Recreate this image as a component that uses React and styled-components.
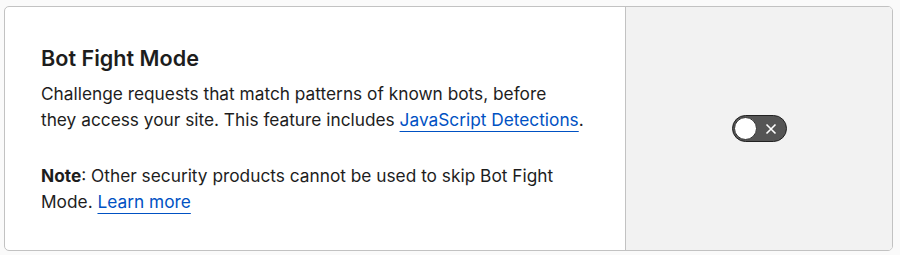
import React from 'react';
import styled, { createGlobalStyle } from 'styled-components';

const GlobalStyle = createGlobalStyle`
  body {
    margin: 0;
    background: #fafafa;
    font-family: Inter, "Noto Sans", sans-serif;
    color: #1d1d1d;
  }
`;

const Page = styled.div`
  padding: 6px 7px 4px 4px;
`;

const Card = styled.div`
  display: flex;
  width: 889px;
  height: 245px;
  box-sizing: border-box;
  border: 1px solid #c2c2c2;
  border-radius: 5px;
  background: #fff;
  overflow: hidden;
`;

const Body = styled.div`
  width: 621px;
  box-sizing: border-box;
  padding: 37px 36px 0 36px;
  border-right: 1px solid #c2c2c2;
`;

const Title = styled.h3`
  margin: 0 0 9px;
  font-size: 21.6px;
  font-weight: 600;
  line-height: 28px;
`;

const Text = styled.p`
  margin: ${p => (p.$spaced ? '31px 0 0' : '0')};
  font-size: 17.3px;
  line-height: 25.6px;
`;

const Link = styled.a`
  color: #0051c3;
  text-decoration: underline;
  text-decoration-thickness: 1px;
  text-underline-offset: 5px;
`;

const Aside = styled.div`
  flex: 1;
  display: flex;
  align-items: center;
  justify-content: center;
  background: #f2f2f2;
`;

const Toggle = styled.button`
  display: flex;
  align-items: center;
  width: 55px;
  height: 27px;
  padding: 0 1px;
  box-sizing: border-box;
  border: 1px solid #222;
  border-radius: 14px;
  background: #555;
  cursor: pointer;
`;

const Knob = styled.span`
  width: 23px;
  height: 23px;
  box-sizing: border-box;
  border-radius: 50%;
  background: #fff;
  border: 1px solid #333;
`;

const Cross = styled.svg`
  margin-left: 8px;
`;

export default function App() {
  return (
    <>
      <GlobalStyle />
      <Page>
        <Card>
          <Body>
            <Title>Bot Fight Mode</Title>
            <Text>
              Challenge requests that match patterns of known bots, before
              <br />
              they access your site. This feature includes <Link href="#">JavaScript Detections</Link>.
            </Text>
            <Text $spaced>
              <strong>Note</strong>: Other security products cannot be used to skip Bot Fight
              Mode. <Link href="#">Learn more</Link>
            </Text>
          </Body>
          <Aside>
            <Toggle aria-label="Bot Fight Mode">
              <Knob />
              <Cross width="12" height="12" viewBox="0 0 12 12">
                <path d="M1.5 1.5 L10.5 10.5 M10.5 1.5 L1.5 10.5" stroke="#fff" strokeWidth="1.6" fill="none" />
              </Cross>
            </Toggle>
          </Aside>
        </Card>
      </Page>
    </>
  );
}
